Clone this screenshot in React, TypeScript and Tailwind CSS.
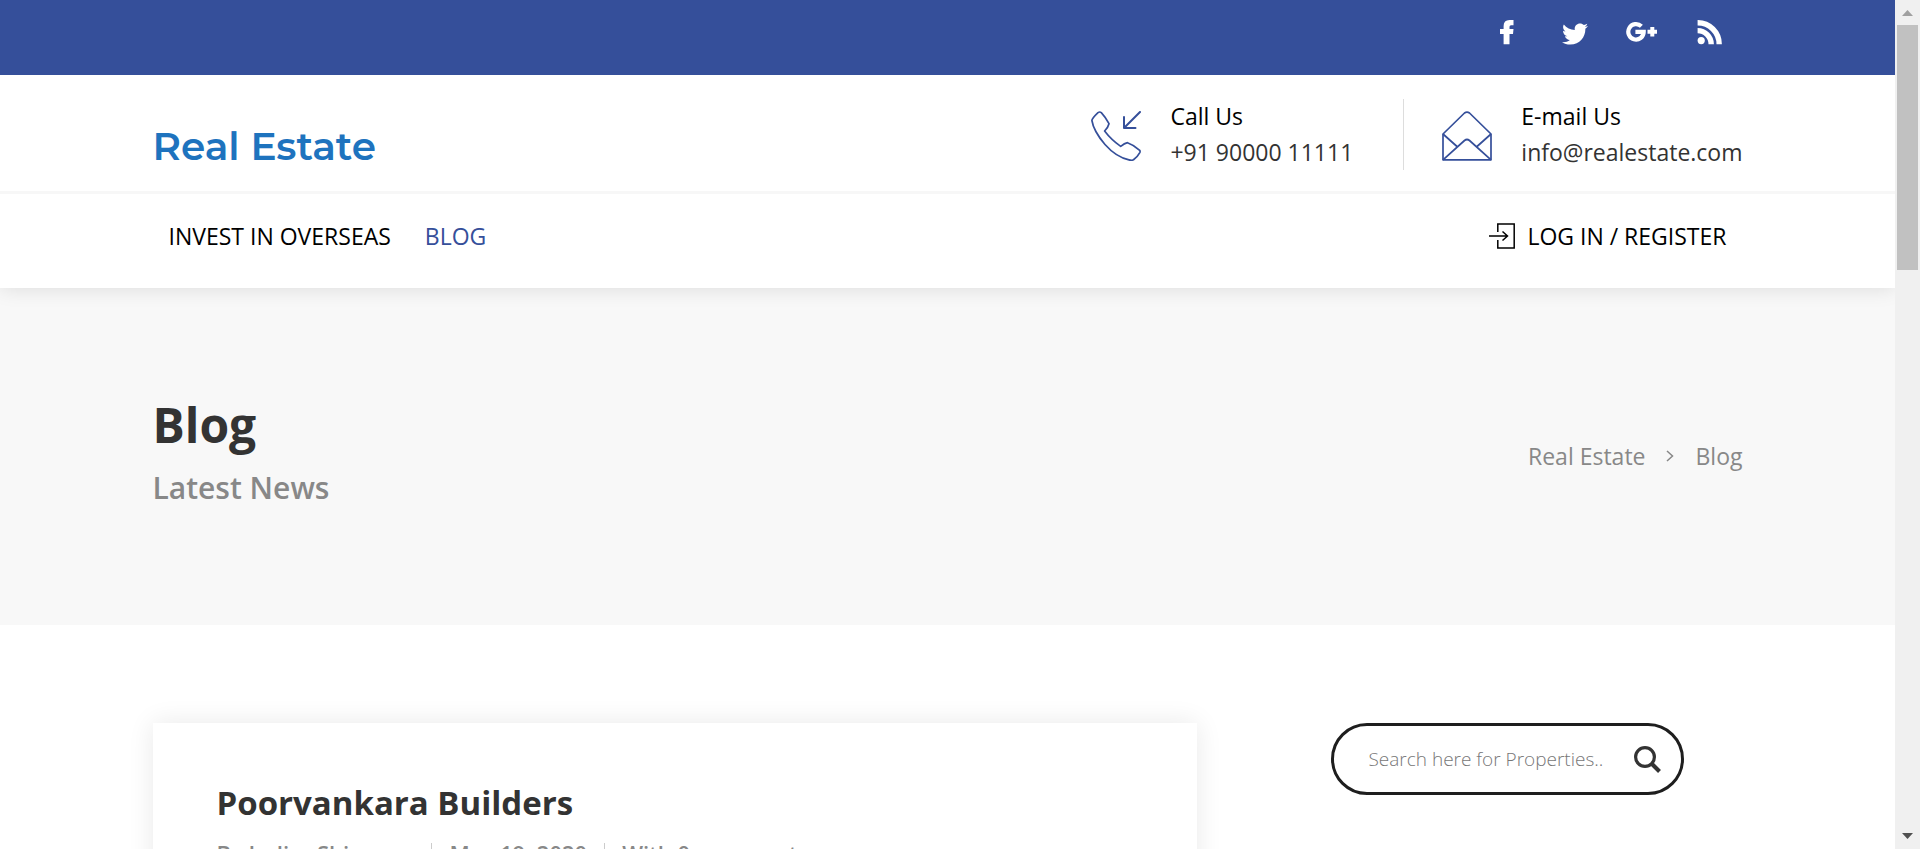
import React from "react";
import { FaTwitter } from "react-icons/fa";

function FacebookIcon() {
  return (
    <svg viewBox="0 0 14 26" className="h-[26px] w-[14px]" fill="currentColor" aria-hidden="true">
      <path d="M13.500 0v5.200H11q-1.500 0-1.500 1.500V9h4l-.5 5H9.500v10.300H3.600V14H0V9h3.600V6Q3.600 0 9.500 0Z" />
    </svg>
  );
}

function GooglePlusIcon() {
  return (
    <svg viewBox="0 0 32 26" className="h-[26px] w-8" fill="none" stroke="currentColor" aria-hidden="true">
      <path d="M15.400 6.300A7.700 7.700 0 1 0 17.700 11.900H9.400" strokeWidth="4.200" />
      <path d="M26.300 7v9.600M21.500 11.800H31" strokeWidth="4" />
    </svg>
  );
}

function RssIcon() {
  return (
    <svg viewBox="0 0 26 26" className="size-[26px]" fill="none" stroke="currentColor" aria-hidden="true">
      <circle cx="4.200" cy="20.600" r="3.600" fill="currentColor" stroke="none" />
      <path d="M.6 10.600A13.600 13.600 0 0 1 14.200 24.200M.6 2.700A21.500 21.500 0 0 1 22.200 24.200" strokeWidth="5.400" />
    </svg>
  );
}

function PhoneIcon() {
  return (
    <svg viewBox="0 0 50 50" className="size-[50px]" fill="none" stroke="currentColor" strokeWidth="1.7" strokeLinejoin="round" strokeLinecap="round" aria-hidden="true">
      <path d="M7 1.600Q8.800.4 10.300 1.600 14 5.500 18 12.700 17.300 16 13.600 20 20 28.500 29.700 35.400 33.500 32.300 36.500 31.700 43 34 48.700 39.300 49.400 40.300 48.800 41.600 46.500 45.800 42.500 48.800 41 49.600 38 48.900 25 46 14 33.500 2.500 20 .9 9.500.9 7.500 7 1.600Z" />
      <path d="M49 1 33 17M33 6v11h11.500" strokeWidth="2" />
    </svg>
  );
}

function MailIcon() {
  return (
    <svg viewBox="0 0 50 50" className="size-[50px]" fill="none" stroke="currentColor" strokeWidth="1.7" strokeLinejoin="round" aria-hidden="true">
      <path d="M1 23 22.500 2Q25 .2 27.500 2L49 23v25.800H1Z" />
      <path d="m1 23 14 12.500M49 23 35 35.500M1 48.800 22.500 29.500q2.500-2 5 0L49 48.800" />
    </svg>
  );
}

function LoginIcon() {
  return (
    <svg viewBox="0 0 26 26" className="size-[26px]" fill="none" stroke="currentColor" strokeWidth="1.500" aria-hidden="true">
      <path d="M8.800 9V1h16.400v24H8.800v-8M0 13h18M13.500 8.500 18.500 13l-5 4.500" />
    </svg>
  );
}

function SearchIcon() {
  return (
    <svg viewBox="0 0 27 27" className="size-[27px]" fill="none" stroke="currentColor" strokeWidth="3.200" aria-hidden="true">
      <circle cx="11" cy="11" r="9.400" />
      <path d="m17.500 17.500 8 8" strokeWidth="4" />
    </svg>
  );
}

function ContactItem({ icon, label, value, href }: { icon: React.ReactNode; label: string; value: string; href: string }) {
  return (
    <div className="flex items-center gap-[29px]">
      <span className="pt-1 text-[#354f9a]">{icon}</span>
      <div className="text-[23px] font-medium leading-9">
        <p className="text-black">{label}</p>
        <a href={href} className="block text-[#333]">{value}</a>
      </div>
    </div>
  );
}

function ScrollBar() {
  return (
    <div className="flex w-[25px] shrink-0 flex-col items-center justify-between bg-[#f0f0f0]" aria-hidden="true">
      <div className="flex w-[21px] flex-col items-center">
        <svg viewBox="0 0 11 6" className="mt-[10px] mb-[9px] h-[6px] w-[11px]" fill="#a0a0a0"><path d="M5.500 0 11 6H0Z" /></svg>
        <div className="h-[245px] w-[21px] bg-[#c1c1c1]" />
      </div>
      <svg viewBox="0 0 11 6" className="mb-[10px] h-[6px] w-[11px]" fill="#505050"><path d="M0 0h11L5.500 6Z" /></svg>
    </div>
  );
}

export default function App() {
  return (
    <div className="flex h-screen overflow-hidden bg-white font-['Open_Sans',sans-serif] text-[#333]">
      <div className="min-w-0 flex-1 overflow-hidden">
        <div className="relative z-10 h-[75px] bg-[#354f9a]">
          <div className="mx-auto flex max-w-[1590px] items-start justify-end pt-5 pr-5 text-white">
            <a href="#facebook" aria-label="Facebook" className="mr-12"><FacebookIcon /></a>
            <a href="#twitter" aria-label="Twitter" className="mr-[38px] pt-px"><FaTwitter className="size-[26px]" /></a>
            <a href="#google-plus" aria-label="Google Plus" className="mr-[39px]"><GooglePlusIcon /></a>
            <a href="#rss" aria-label="RSS"><RssIcon /></a>
          </div>
        </div>

        <header className="relative shadow-[0_0_20px_rgba(0,0,0,0.120)]">
          <div className="border-b-3 border-[#f7f7f7]">
            <div className="mx-auto flex h-[116px] max-w-[1590px] items-start justify-between">
              <a href="#home" className="pt-[47px] font-['Montserrat','Inter',sans-serif] text-[39px] font-semibold leading-12 text-[#1e73be]">Real Estate</a>
              <div className="flex pt-[23px]">
                <ContactItem icon={<PhoneIcon />} label="Call Us" value="+91 90000 11111" href="tel:+919000011111" />
                <div className="mt-px mr-[38px] ml-[50px] w-px bg-[#ddd]" />
                <ContactItem icon={<MailIcon />} label="E-mail Us" value="info@realestate.com" href="mailto:info@realestate.com" />
              </div>
            </div>
          </div>
          <nav className="mx-auto flex h-[94px] max-w-[1590px] items-start justify-between px-4 pt-6 text-[23px] font-medium leading-9 text-black">
            <div className="flex gap-[34px]">
              <a href="#invest">INVEST IN OVERSEAS</a>
              <a href="#blog" className="text-[#354f9a]">BLOG</a>
            </div>
            <a href="#login" className="flex items-center gap-3"><LoginIcon />LOG IN / REGISTER</a>
          </nav>
        </header>

        <section className="bg-[#f8f8f8] pt-[103px] pb-[105px]">
          <div className="mx-auto flex max-w-[1590px] items-center justify-between">
            <div>
              <h1 className="text-[48px] font-bold leading-[68px]">Blog</h1>
              <p className="pt-2 pb-3 text-[30px] font-semibold leading-[41px] text-[#888]">Latest News</p>
            </div>
            <div className="flex items-center text-[23px] leading-9 text-[#888]">
              <a href="#home">Real Estate</a>
              <svg viewBox="0 0 8 12" className="mr-[22px] ml-5 h-3 w-2" fill="none" stroke="currentColor" strokeWidth="1.500" aria-hidden="true"><path d="m1 1 5.500 5L1 11" /></svg>
              <span>Blog</span>
            </div>
          </div>
        </section>

        <main className="mx-auto flex max-w-[1590px] items-start pt-[98px]">
          <article className="w-[1044px] px-16 pt-[56px] pb-16 shadow-[0_0_25px_rgba(0,0,0,0.090)]">
            <h2 className="text-[33px] font-bold leading-12">Poorvankara Builders</h2>
            <div className="flex items-center pt-[11px] text-[22px] font-semibold leading-[30px] text-[#888]">
              <span>By Indira Shivanna</span>
              <span className="mx-[17px] h-5 w-px bg-[#ccc]" />
              <span>May 19, 2020</span>
              <span className="mx-[17px] h-5 w-px bg-[#ccc]" />
              <span>With 0 comments</span>
            </div>
          </article>
          <form className="ml-[134px] flex h-[72px] w-[353px] items-center rounded-full border-3 border-[#1e1e1e] pr-5 pl-[35px]">
            <input type="text" aria-label="Search properties" placeholder="Search here for Properties.." className="min-w-0 flex-1 text-[19px] font-light outline-none placeholder:text-[#777]" />
            <button type="button" aria-label="Search" className="text-[#333]"><SearchIcon /></button>
          </form>
        </main>
      </div>
      <ScrollBar />
    </div>
  );
}
